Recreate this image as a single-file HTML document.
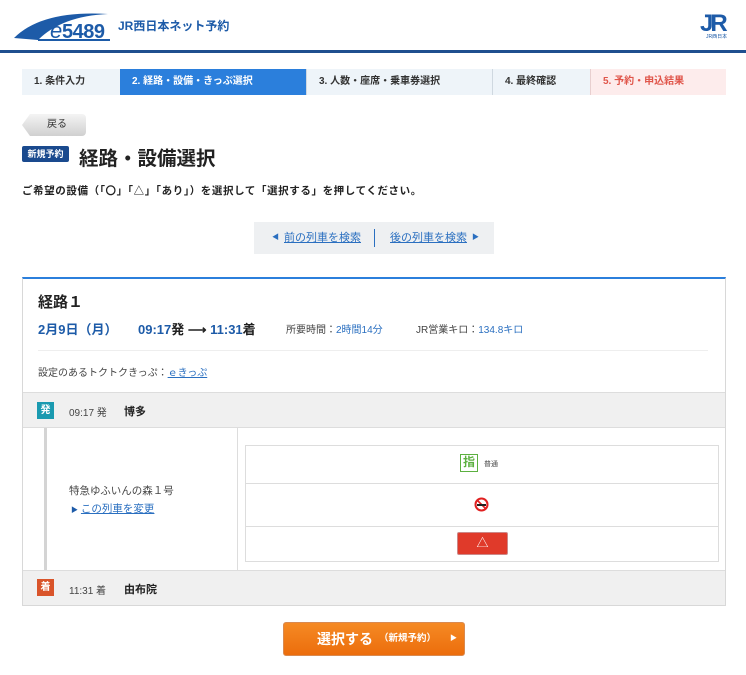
<!DOCTYPE html>
<html><head><meta charset="utf-8"><style>
*{margin:0;padding:0;box-sizing:border-box}
body{width:746px;height:675px;background:#fff;font-family:"Liberation Sans","Noto Sans CJK JP",sans-serif;color:#333;position:relative;overflow:hidden}
.a{position:absolute}
.hl{left:0;top:50px;width:746px;height:3px;background:#1f4f8f}
.step{position:absolute;top:69px;height:26px;font-size:10px;font-weight:bold;line-height:26px;padding-left:12px}
.link{color:#2a6fc0;text-decoration:underline}
</style></head><body>
<svg class="a" style="left:12px;top:8px" width="100" height="36" viewBox="0 0 100 36">
<path d="M2 30 Q30 2 96 6 Q50 8 26 32 Z" fill="#1d5ba8"/>
<text x="38" y="30" font-family="Liberation Sans" font-style="italic" font-size="22" fill="#1d5ba8">e</text>
<text x="50" y="30" font-family="Liberation Sans" font-weight="bold" font-size="20" fill="#1d5ba8" letter-spacing="-0.5">5489</text>
<rect x="26" y="31" width="72" height="2" fill="#1d5ba8"/>
</svg>
<div class="a" style="left:118px;top:17px;font-size:12px;font-weight:bold;color:#1d5ba8">JR西日本ネット予約</div>
<div class="a" style="left:700px;top:10px;font-size:24px;font-weight:bold;color:#1d5ba8;letter-spacing:-3px">JR</div>
<div class="a" style="left:706px;top:33px;font-size:5px;color:#1d5ba8">JR西日本</div>
<div class="a hl"></div>

<div class="step" style="left:22px;width:98px;background:#eef4f9;color:#333">1. 条件入力</div>
<div class="step" style="left:120px;width:186px;background:#2b7fdc;color:#fff">2. 経路・設備・きっぷ選択</div>
<div class="step" style="left:306px;width:186px;background:#eef4f9;border-left:1px solid #cfd8e0">3. 人数・座席・乗車券選択</div>
<div class="step" style="left:492px;width:98px;background:#eef4f9;border-left:1px solid #cfd8e0">4. 最終確認</div>
<div class="step" style="left:590px;width:136px;background:#fdecec;color:#e0554a;border-left:1px solid #e8cfcf">5. 予約・申込結果</div>

<div class="a" style="left:22px;top:114px;width:64px;height:22px;background:linear-gradient(#f4f4f4,#d0d0d0);border-radius:0 4px 4px 0;clip-path:polygon(8px 0,100% 0,100% 100%,8px 100%,0 50%);font-size:10px;text-align:center;line-height:22px;padding-left:6px">戻る</div>
<div class="a" style="left:22px;top:146px;width:47px;height:16px;background:#1a4a8e;color:#fff;font-size:9px;font-weight:bold;text-align:center;line-height:16px;border-radius:2px">新規予約</div>
<div class="a" style="left:79px;top:142px;font-size:19.5px;font-weight:bold;color:#222">経路・設備選択</div>
<div class="a" style="left:22px;top:183px;font-size:10.5px;font-weight:bold;color:#222;letter-spacing:0.6px;white-space:nowrap">ご希望の設備（「〇」「△」「あり」）を選択して「選択する」を押してください。</div>

<div class="a" style="left:254px;top:222px;width:240px;height:32px;background:#eef0f2;font-size:11px;line-height:32px">
<span class="a" style="left:18px;color:#2a6fc0;font-size:7px">◀</span>
<span class="a link" style="left:30px">前の列車を検索</span>
<span class="a" style="left:120px;top:7px;width:1px;height:18px;background:#2a6fc0"></span>
<span class="a link" style="left:136px">後の列車を検索</span>
<span class="a" style="left:218px;color:#2a6fc0;font-size:7px">▶</span>
</div>

<div class="a" style="left:22px;top:277px;width:704px;height:329px;border:1px solid #d8d8d8;border-top:2px solid #2b7fdc"></div>
<div class="a" style="left:38px;top:291px;font-size:15px;font-weight:bold;color:#222">経路１</div>
<div class="a" style="left:38px;top:319px;font-size:13px;font-weight:bold;color:#1d5ba8">2月9日（月）</div>
<div class="a" style="left:138px;top:319px;font-size:13px;font-weight:bold;color:#1d5ba8">09:17<span style="color:#222">発 ⟶ </span>11:31<span style="color:#222">着</span></div>
<div class="a" style="left:286px;top:321px;font-size:10px;color:#444">所要時間：<span style="color:#2a6fc0">2時間14分</span></div>
<div class="a" style="left:416px;top:321px;font-size:10px;color:#444">JR営業キロ：<span style="color:#2a6fc0">134.8キロ</span></div>
<div class="a" style="left:38px;top:350px;width:670px;height:1px;background:#eee"></div>
<div class="a" style="left:38px;top:364px;font-size:10px;color:#444">設定のあるトクトクきっぷ：<span class="link">ｅきっぷ</span></div>

<div class="a" style="left:23px;top:392px;width:702px;height:36px;background:#f0f0f0;border-top:1px solid #ddd;border-bottom:1px solid #ddd"></div>
<div class="a" style="left:37px;top:402px;width:17px;height:17px;background:#1a9ab0;color:#fff;font-size:10px;font-weight:bold;text-align:center;line-height:17px">発</div>
<div class="a" style="left:69px;top:404px;font-size:10px;color:#444">09:17 発</div>
<div class="a" style="left:124px;top:403px;font-size:11px;font-weight:bold;color:#222">博多</div>

<div class="a" style="left:44px;top:428px;width:3px;height:142px;background:#d4d4d4"></div>
<div class="a" style="left:237px;top:428px;width:1px;height:142px;background:#ddd"></div>
<div class="a" style="left:69px;top:483px;font-size:10.5px;color:#444">特急ゆふいんの森１号</div>
<div class="a" style="left:71px;top:501px;font-size:10.5px"><span style="color:#1d5ba8;font-size:7px">▶</span> <span class="link">この列車を変更</span></div>

<div class="a" style="left:245px;top:445px;width:474px;height:117px;border:1px solid #ddd"></div>
<div class="a" style="left:246px;top:483px;width:472px;height:1px;background:#ddd"></div>
<div class="a" style="left:246px;top:526px;width:472px;height:1px;background:#ddd"></div>
<div class="a" style="left:460px;top:454px;width:18px;height:18px;border:1.5px solid #5cb040;color:#5cb040;font-size:12px;font-weight:bold;text-align:center;line-height:15px">指</div>
<div class="a" style="left:484px;top:459px;font-size:7px;color:#444">普通</div>
<svg class="a" style="left:474px;top:497px" width="15" height="15" viewBox="0 0 15 15"><circle cx="7.5" cy="7.5" r="6" fill="none" stroke="#e02020" stroke-width="2"/><line x1="3.5" y1="3.5" x2="11.5" y2="11.5" stroke="#e02020" stroke-width="1.6"/><rect x="3" y="7" width="9" height="2" fill="#222"/></svg>
<div class="a" style="left:457px;top:532px;width:51px;height:23px;background:#e03a2a;border:1px solid #c88;border-radius:2px;color:#fff;font-size:12px;text-align:center;line-height:21px">△</div>

<div class="a" style="left:23px;top:570px;width:702px;height:35px;background:#f0f0f0;border-top:1px solid #ddd"></div>
<div class="a" style="left:37px;top:579px;width:17px;height:17px;background:#d9542a;color:#fff;font-size:10px;font-weight:bold;text-align:center;line-height:17px">着</div>
<div class="a" style="left:69px;top:582px;font-size:10px;color:#444">11:31 着</div>
<div class="a" style="left:124px;top:581px;font-size:11px;font-weight:bold;color:#222">由布院</div>

<div class="a" style="left:283px;top:622px;width:182px;height:34px;background:linear-gradient(#f58a24,#ec6d0c);border:1px solid #d98a50;border-radius:3px;color:#fff;font-weight:bold;line-height:32px">
<span class="a" style="left:33px;font-size:14px">選択する</span><span class="a" style="left:95px;font-size:9.5px">（新規予約）</span><span class="a" style="left:166px;font-size:7px">▶</span></div>
</body></html>
